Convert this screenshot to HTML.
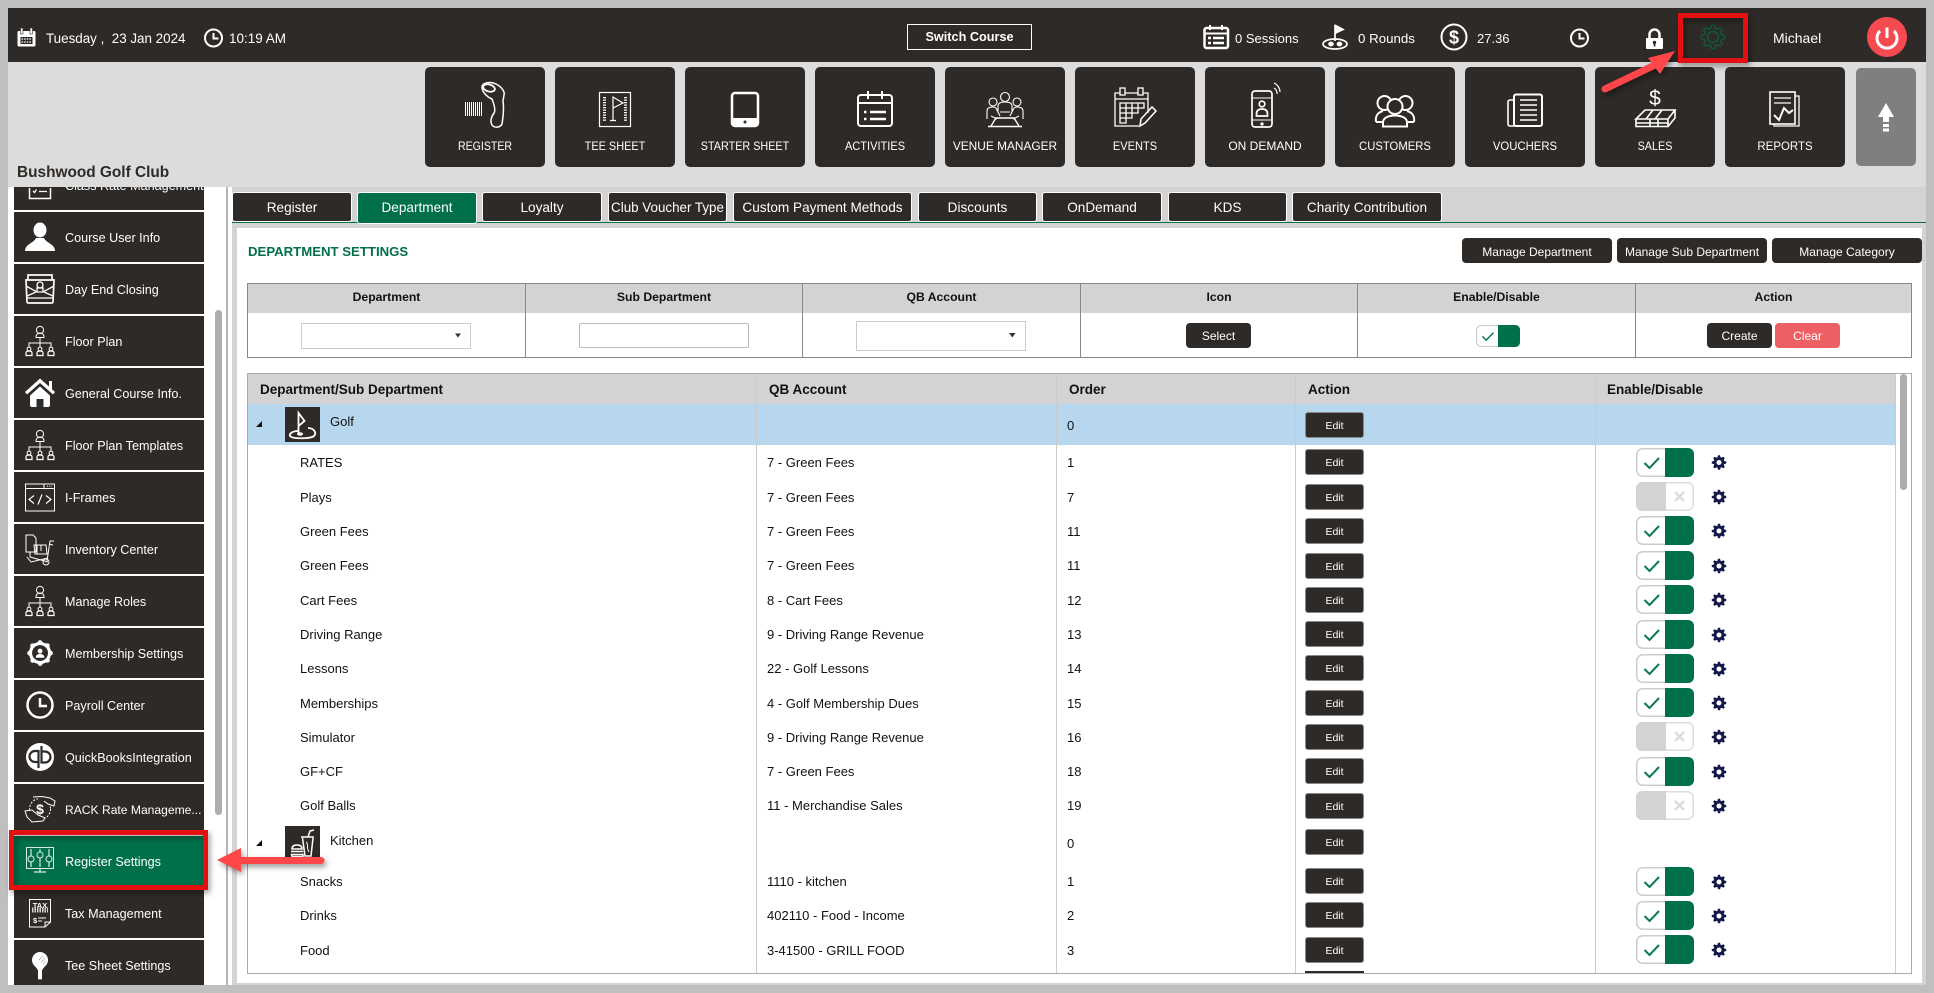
<!DOCTYPE html>
<html lang="en"><head><meta charset="utf-8"><title>Department Settings</title>
<style>
html,body{margin:0;padding:0;width:1934px;height:993px;overflow:hidden;background:#bfbfbf}
body{position:relative;font-family:"Liberation Sans",sans-serif;color:#111}
div{position:absolute;box-sizing:border-box}
svg{position:absolute;left:0;top:0;overflow:visible}
.t{white-space:nowrap;line-height:16px;height:16px;margin-top:1px}
.w{color:#fff}
.c{text-align:center}
.b{background:#2e2a27;border-radius:5px}
.n{width:120px;top:138px;font-size:12px;color:#fff;text-align:center;line-height:16px}
.s{background:#2e2a27;left:14px;width:190px;height:50px}
.st{left:65px;font-size:12.6px;color:#fff;white-space:nowrap;line-height:16px;margin-top:1px}
.tab{top:192px;height:30px;background:#2e2a27;color:#fff;font-size:13.6px;text-align:center;line-height:29px;border:1px solid #fff;border-radius:3px;white-space:nowrap}
.mb{top:238px;height:25px;width:150px;background:#2e2a27;color:#fff;font-size:12px;text-align:center;line-height:29px;border-radius:4px}
.fh{top:289px;font-size:12.2px;font-weight:bold;text-align:center;line-height:16px}
.th{top:381px;font-size:13.5px;font-weight:bold;line-height:16px;white-space:nowrap;margin-top:1px}
.r{font-size:13px;line-height:16px;white-space:nowrap;margin-top:1px}
.e{left:1305px;width:59px;height:26px;background:#2e2a27;border:1px solid #8a8a8a;border-radius:3px;color:#fff;font-size:10.5px;text-align:center;line-height:26px}
.btn{top:323px;height:25px;width:65px;border-radius:4px;color:#fff;font-size:12px;text-align:center;line-height:27px}
.vl{width:1px;top:374px;height:599px;background:#ccc}
.fl{width:1px;top:283px;height:74px;background:#888}
</style></head><body>

<!-- frame backgrounds -->
<div style="left:8px;top:8px;width:1918px;height:54px;background:#2e2a27"></div>
<div style="left:8px;top:62px;width:1918px;height:125px;background:#dcdcdc"></div>
<div style="left:8px;top:187px;width:1918px;height:798px;background:#fff"></div>
<div style="left:232px;top:187px;width:1694px;height:798px;background:#d3d3d3"></div>
<div style="left:226px;top:187px;width:2px;height:798px;background:#b5b5b5"></div>
<div style="left:237px;top:228px;width:1685px;height:755px;background:#fff"></div>
<div style="left:232px;top:222px;width:1694px;height:1px;background:#00704a"></div>
<div style="left:215px;top:310px;width:7px;height:505px;background:#aeadad;border-radius:4px"></div>

<!-- nav tiles -->
<div class="b" style="left:425px;top:67px;width:120px;height:100px"></div>
<div class="b" style="left:555px;top:67px;width:120px;height:100px"></div>
<div class="b" style="left:685px;top:67px;width:120px;height:100px"></div>
<div class="b" style="left:815px;top:67px;width:120px;height:100px"></div>
<div class="b" style="left:945px;top:67px;width:120px;height:100px"></div>
<div class="b" style="left:1075px;top:67px;width:120px;height:100px"></div>
<div class="b" style="left:1205px;top:67px;width:120px;height:100px"></div>
<div class="b" style="left:1335px;top:67px;width:120px;height:100px"></div>
<div class="b" style="left:1465px;top:67px;width:120px;height:100px"></div>
<div class="b" style="left:1595px;top:67px;width:120px;height:100px"></div>
<div class="b" style="left:1725px;top:67px;width:120px;height:100px"></div>
<div style="left:1856px;top:68px;width:60px;height:98px;background:#7f7f7f;border-radius:5px"></div>

<!-- sidebar tiles -->
<div class="s" style="top:187px;height:23px"></div>
<div class="s" style="top:212px"></div>
<div class="s" style="top:264px"></div>
<div class="s" style="top:316px"></div>
<div class="s" style="top:368px"></div>
<div class="s" style="top:420px"></div>
<div class="s" style="top:472px"></div>
<div class="s" style="top:524px"></div>
<div class="s" style="top:576px"></div>
<div class="s" style="top:628px"></div>
<div class="s" style="top:680px"></div>
<div class="s" style="top:732px"></div>
<div class="s" style="top:784px"></div>
<div class="s" style="top:836px;background:#00704a"></div>
<div class="s" style="top:888px"></div>
<div class="s" style="top:940px;height:45px"></div>

<!-- tabs -->
<div class="tab" style="left:232px;width:120px">Register</div>
<div class="tab" style="left:357px;width:120px;height:32px;background:#00704a">Department</div>
<div class="tab" style="left:482px;width:120px">Loyalty</div>
<div class="tab" style="left:608px;width:119px;font-size:13.4px">Club Voucher Type</div>
<div class="tab" style="left:733px;width:179px">Custom Payment Methods</div>
<div class="tab" style="left:918px;width:119px">Discounts</div>
<div class="tab" style="left:1042px;width:120px">OnDemand</div>
<div class="tab" style="left:1168px;width:119px">KDS</div>
<div class="tab" style="left:1292px;width:150px">Charity Contribution</div>

<!-- form table -->
<div style="left:247px;top:283px;width:1665px;height:75px;border:1px solid #888;border-width:1px;background:#fff"></div>
<div style="left:248px;top:284px;width:1663px;height:29px;background:#d3d3d3"></div>
<div class="fl" style="left:525px"></div><div class="fl" style="left:802px"></div><div class="fl" style="left:1080px"></div><div class="fl" style="left:1357px"></div><div class="fl" style="left:1635px"></div>
<div style="left:301px;top:323px;width:170px;height:26px;border:1px solid #ccc;background:#fff"></div>
<div style="left:579px;top:323px;width:170px;height:25px;border:1px solid #bbb;border-radius:2px;background:#fff"></div>
<div style="left:856px;top:321px;width:170px;height:30px;border:1px solid #ccc;background:#fff"></div>

<!-- list table -->
<div style="left:247px;top:373px;width:1665px;height:601px;border:1px solid #aaa;background:#fff"></div>
<div style="left:248px;top:374px;width:1647px;height:30px;background:#d3d3d3"></div>
<div style="left:248px;top:404px;width:1647px;height:41px;background:#b7d7ee"></div>
<div class="vl" style="left:756px"></div><div class="vl" style="left:1056px"></div><div class="vl" style="left:1295px"></div><div class="vl" style="left:1595px"></div><div class="vl" style="left:1895px"></div>
<div style="left:1900px;top:374px;width:7px;height:116px;background:#aeadad;border-radius:4px"></div>
<div style="left:1305px;top:971px;width:59px;height:2px;background:#2e2a27"></div>

<!-- icons -->
<svg width="1934" height="993" viewBox="0 0 1934 993">
<defs>
<clipPath id="side"><rect x="8" y="188" width="200" height="797"/></clipPath>
<path id="gp" d="M19.4 15a1.65 1.65 0 0 0 .33 1.82l.06.06a2 2 0 0 1 0 2.83 2 2 0 0 1-2.83 0l-.06-.06a1.65 1.65 0 0 0-1.82-.33 1.65 1.65 0 0 0-1 1.51V21a2 2 0 0 1-2 2 2 2 0 0 1-2-2v-.09A1.65 1.65 0 0 0 9 19.4a1.65 1.65 0 0 0-1.82.33l-.06.06a2 2 0 0 1-2.83 0 2 2 0 0 1 0-2.83l.06-.06a1.65 1.65 0 0 0 .33-1.82 1.65 1.65 0 0 0-1.51-1H3a2 2 0 0 1-2-2 2 2 0 0 1 2-2h.09A1.65 1.65 0 0 0 4.6 9a1.65 1.65 0 0 0-.33-1.82l-.06-.06a2 2 0 0 1 0-2.83 2 2 0 0 1 2.83 0l.06.06a1.65 1.65 0 0 0 1.82.33H9a1.65 1.65 0 0 0 1-1.51V3a2 2 0 0 1 2-2 2 2 0 0 1 2 2v.09a1.65 1.65 0 0 0 1 1.51 1.65 1.65 0 0 0 1.82-.33l.06-.06a2 2 0 0 1 2.83 0 2 2 0 0 1 0 2.83l-.06.06a1.65 1.65 0 0 0-.33 1.82V9a1.65 1.65 0 0 0 1.51 1H21a2 2 0 0 1 2 2 2 2 0 0 1-2 2h-.09a1.65 1.65 0 0 0-1.51 1z"/>
<symbol id="gear" viewBox="0 0 24 24"><use href="#gp" fill="#14194a"/><circle cx="12" cy="12" r="8" fill="#14194a"/><circle cx="12" cy="12" r="3.800" fill="#fff"/></symbol>
<symbol id="on" viewBox="0 0 58 29"><rect x=".75" y=".75" width="56.5" height="27.5" rx="6" fill="#fff" stroke="#ccc" stroke-width="1.5"/><path d="M29 0H52a6 6 0 0 1 6 6V23a6 6 0 0 1-6 6H29z" fill="#00704a"/><path d="M8.5 15l5 5 9.5-10" fill="none" stroke="#0a7a50" stroke-width="2"/></symbol>
<symbol id="off" viewBox="0 0 58 29"><rect x=".75" y=".75" width="56.5" height="27.5" rx="6" fill="#fff" stroke="#ddd" stroke-width="1.5"/><path d="M30 0H6a6 6 0 0 0-6 6V23a6 6 0 0 0 6 6H30z" fill="#d3d3d3"/><path d="M39 10l9 9M48 10l-9 9" fill="none" stroke="#ddd" stroke-width="2.6"/></symbol>
<g id="org" fill="none" stroke="#fff" stroke-width="1"><circle cx="0" cy="-11" r="3.6"/><path d="M-4-3.5c0-3.5 2-4.5 4-4.5s4 1 4 4.500zM0-3.500V6M-11 6V2H11V6"/><circle cx="-11" cy="8" r="1.900"/><circle cx="0" cy="8" r="1.900"/><circle cx="11" cy="8" r="1.900"/><path d="M-14 14.500v-2.500q0-2 3-2t3 2v2.500zM-3 14.500v-2.500q0-2 3-2t3 2v2.500zM8 14.500v-2.500q0-2 3-2t3 2v2.500z" stroke-width="1.200"/></g>
</defs>

<!-- header: calendar -->
<rect x="17.500" y="31" width="18" height="15.500" rx="1.500" fill="#fff"/><rect x="20.500" y="28" width="2.500" height="6" fill="#fff" stroke="#2e2a27" stroke-width=".6"/><rect x="30" y="28" width="2.500" height="6" fill="#fff" stroke="#2e2a27" stroke-width=".6"/><rect x="20.500" y="37" width="12" height="7" fill="#2e2a27"/><path d="M21.500 39H31.500M21.500 42H31.500" stroke="#fff" stroke-width="1.200" stroke-dasharray="1.600 1"/>
<g fill="none" stroke="#fff" stroke-width="2"><circle cx="213.500" cy="38" r="8.500"/><path d="M213.500 33V38.500H218.500"/><circle cx="1579.500" cy="38" r="8.500"/><path d="M1579.500 33V38.500H1584.500"/></g>
<!-- sessions -->
<g fill="none" stroke="#fff"><rect x="1204.500" y="28" width="23.500" height="20" rx="2" stroke-width="2.500"/><path d="M1204 33.500H1228" stroke-width="2"/><path d="M1210 25V30M1222 25V30" stroke-width="2"/><path d="M1208 38H1211M1213 38H1224M1208 43H1211M1213 43H1224" stroke-width="2.400"/></g>
<!-- rounds -->
<g fill="none" stroke="#fff" stroke-width="1.700"><path d="M1335 41V25"/><path d="M1335.500 25.500L1343 29.500 1335.500 33z" fill="#fff"/><ellipse cx="1335" cy="44" rx="12" ry="5"/><ellipse cx="1331" cy="44" rx="2" ry="1.500" fill="#fff"/><ellipse cx="1339.500" cy="44" rx="2" ry="1.500" fill="#fff"/></g>
<circle cx="1454" cy="37" r="12.500" fill="none" stroke="#fff" stroke-width="2"/><text x="1454" y="43.500" font-size="18" font-weight="bold" fill="#fff" text-anchor="middle" font-family="Liberation Sans">$</text>
<!-- lock -->
<rect x="1646" y="38" width="17" height="11" rx="1" fill="#fff"/><path d="M1649.500 38V34.500a5 5 0 0 1 10 0V38" fill="none" stroke="#fff" stroke-width="2.500"/><circle cx="1654.500" cy="42.500" r="1.700" fill="#2e2a27"/><rect x="1653.700" y="43" width="1.700" height="3.500" fill="#2e2a27"/>
<!-- gear green -->
<g transform="translate(1700 24) scale(1.08)" fill="none" stroke="#0b5e3d" stroke-width="1.300"><use href="#gp"/><circle cx="12" cy="12" r="5"/></g>
<!-- power -->
<ellipse cx="1887" cy="37" rx="20" ry="20" fill="#f44a50"/><path d="M1880 31a10 10 0 1 0 14 0M1887 27.500V38" fill="none" stroke="#fff" stroke-width="3"/>

<!-- nav icons -->
<path d="M465 109H483" stroke="#fff" stroke-width="14" stroke-dasharray="1 1"/>
<g fill="none" stroke="#fff" stroke-width="1.500"><path d="M482 87C482 83 490 81 496 84 502 87 505 92 504 95L503 101C504 108 503 118 502 124 500 128 494 128 492 125 490 122 491 117 494 113 496 110 494 104 492 99 487 97 482 92 482 87Z"/><ellipse cx="489" cy="88" rx="6" ry="3.500" transform="rotate(15 489 88)" stroke-width="1.800"/></g>
<g fill="none" stroke="#fff"><rect x="599.500" y="92.500" width="31" height="34" stroke-width="1.200"/><path d="M604.500 97V122M625.500 97V122" stroke-width="3" stroke-dasharray="1.200 1.300"/><path d="M613 120V97L623 103 613 108M610 120.500H616" stroke-width="1.200"/></g>
<rect x="732" y="93" width="26" height="33" rx="3" fill="none" stroke="#fff" stroke-width="2.500"/><rect x="732" y="118" width="26" height="8" fill="#fff"/><circle cx="745" cy="122" r="1.500" fill="#2e2a27"/>
<g fill="none" stroke="#fff" stroke-width="2"><rect x="858" y="95" width="34" height="31" rx="3"/><path d="M858 103H892M868 91V99M882 91V99"/><path d="M864 112H866.500M864 119H866.500M870 112H886M870 119H886" stroke-width="2.400"/></g>
<g fill="none" stroke="#fff" stroke-width="1.100"><circle cx="1005" cy="97" r="4.500"/><circle cx="993" cy="102" r="4"/><circle cx="1017" cy="102" r="4"/><path d="M998 112V106Q998 102 1005 102T1012 106V112M987 119V111Q987 107 993 107 996 107 997 110L1000 116M1023 119V111Q1023 107 1017 107 1014 107 1013 110L1010 116"/><path d="M1000 112H1010M991 116L997 119M1019 116L1013 119"/><path d="M988 126.500H1022M991 126L996 118H1014L1019 126" stroke-width="1.400"/></g>
<g fill="none" stroke="#fff" stroke-width="1.300"><path d="M1148 113V93H1115V126H1139"/><path d="M1115 99H1148"/><rect x="1120" y="88" width="5" height="7" fill="#2e2a27"/><rect x="1138" y="88" width="5" height="7" fill="#2e2a27"/><path d="M1120 103H1144V108H1138V113H1132V118H1126V123H1120ZM1120 108H1138M1120 113H1132M1120 118H1126M1126 103V123M1132 103V118M1138 103V113"/><path d="M1140 126L1141 119 1152 107 1156 111 1145 123Z" stroke-width="1.500"/></g>
<g fill="none" stroke="#fff" stroke-width="1.700"><rect x="1252" y="91" width="20" height="36" rx="3"/><path d="M1252 98H1272M1252 120H1272" stroke-width="1"/><circle cx="1262" cy="104" r="2.800"/><path d="M1256.500 116v-2q0-5 5.500-5t5.500 5v2z"/><circle cx="1262" cy="124" r=".8"/><path d="M1274 88a6 6 0 0 1 3 6M1274 83a10 10 0 0 1 6 9" stroke-width="1.200"/></g>
<g fill="#2e2a27" stroke="#fff" stroke-width="2"><circle cx="1384.500" cy="103" r="7"/><circle cx="1405.500" cy="103" r="7"/><path d="M1376 122c-1-7 3-10 7-11M1414 122c1-7-3-10-7-11M1376 122h6M1414 122h-6" fill="none"/><circle cx="1395" cy="106.500" r="7.500"/><path d="M1383 126.500v-4c0-5 6-7 12-7s12 2 12 7v4z"/></g>
<g fill="none" stroke="#fff"><rect x="1514" y="94.500" width="28" height="31.500" rx="2" stroke-width="2"/><path d="M1514 100h-4a2 2 0 0 0-2 2v22a2 2 0 0 0 2 2h6" stroke-width="1.600"/><path d="M1520 100H1537M1520 105H1537M1520 110H1537M1520 115H1537M1520 120H1537" stroke-width="1.600"/></g>
<text x="1655" y="105" font-size="21" fill="#fff" text-anchor="middle" font-family="Liberation Sans">$</text>
<g fill="none" stroke="#fff" stroke-width="1.600"><path d="M1645 110H1675L1668 119H1636ZM1653 110L1646 119M1662 110L1655 119M1636 119V126.500H1668V119M1668 126.500L1675 118V110M1636 123H1668M1650 119V126.500M1658 119V126.500"/></g>
<g fill="none" stroke="#fff"><rect x="1770" y="92" width="25" height="32" stroke-width="1.600"/><path d="M1795 96h4v30h-25v-2" stroke-width="1.300"/><path d="M1774 98H1791M1774 103H1791" stroke-width="1.300"/><path d="M1774 115L1779 120 1784 108 1789 113 1793 110" stroke-width="2"/></g>
<path d="M1886 103L1878 117H1883V122H1889V117H1894ZM1883 124H1889V127H1883ZM1883 128.500H1889V131.500H1883Z" fill="#fff"/>

<!-- select carets -->
<path d="M455 333.500H461L458 337.500ZM1009 333H1015.500L1012.300 337.500Z" fill="#333"/>
<use href="#on" x="1476" y="325" width="44" height="22"/>

<!-- table toggles + gears -->
<use href="#on" x="1636" y="448" width="58" height="29"/><use href="#off" x="1636" y="482" width="58" height="29"/><use href="#on" x="1636" y="516" width="58" height="29"/><use href="#on" x="1636" y="551" width="58" height="29"/><use href="#on" x="1636" y="585" width="58" height="29"/><use href="#on" x="1636" y="620" width="58" height="29"/><use href="#on" x="1636" y="654" width="58" height="29"/><use href="#on" x="1636" y="688" width="58" height="29"/><use href="#off" x="1636" y="722" width="58" height="29"/><use href="#on" x="1636" y="757" width="58" height="29"/><use href="#off" x="1636" y="791" width="58" height="29"/><use href="#on" x="1636" y="867" width="58" height="29"/><use href="#on" x="1636" y="901" width="58" height="29"/><use href="#on" x="1636" y="935" width="58" height="29"/>
<g><use href="#gear" x="1711" y="454.500" width="16" height="16"/><use href="#gear" x="1711" y="489" width="16" height="16"/><use href="#gear" x="1711" y="523" width="16" height="16"/><use href="#gear" x="1711" y="558" width="16" height="16"/><use href="#gear" x="1711" y="592" width="16" height="16"/><use href="#gear" x="1711" y="627" width="16" height="16"/><use href="#gear" x="1711" y="661" width="16" height="16"/><use href="#gear" x="1711" y="695" width="16" height="16"/><use href="#gear" x="1711" y="729" width="16" height="16"/><use href="#gear" x="1711" y="764" width="16" height="16"/><use href="#gear" x="1711" y="798" width="16" height="16"/><use href="#gear" x="1711" y="874" width="16" height="16"/><use href="#gear" x="1711" y="908" width="16" height="16"/><use href="#gear" x="1711" y="942" width="16" height="16"/></g>

<!-- tree triangles and dept icons -->
<path d="M262 421V427H256ZM262 840V846H256Z" fill="#111"/>
<rect x="285" y="407" width="35" height="35" fill="#2e2a27"/>
<g fill="none" stroke="#fff" stroke-width="1.800"><path d="M298.500 433V413L304.500 421 298.500 426"/><path d="M298 431C292 431 289 434 290 436 292 439 310 439 314 436 317 433 314 428 308 428"/></g><ellipse cx="300" cy="434" rx="3" ry="1.700" fill="#fff"/>
<rect x="285" y="826" width="35" height="35" fill="#2e2a27"/>
<g fill="none" stroke="#fff" stroke-width="1.500"><path d="M301 837H314M302.500 838L305 856H311L313 838M308 837L310 831 314 830"/><path d="M292 849q0-4 5-4t5 4zM291 851.500H303M291.500 854.500H303v2H292z"/><path d="M306 842c3 2 0 6 3 10" stroke-width="1"/></g>

<!-- sidebar icons -->
<g clip-path="url(#side)">
<g fill="none" stroke="#fff"><rect x="29.500" y="178" width="21" height="20.500" stroke-width="1.500"/><path d="M33 191l1.500 1.500 2-3M39 191.500H47" stroke-width="1.300"/></g>
<g transform="translate(40 237)" fill="#fff"><ellipse cx="0" cy="-7" rx="6.500" ry="7.500"/><path d="M-15 14C-15 7-6 6-4 1H4C6 6 15 7 15 14Z"/></g>
<g transform="translate(40 289)" fill="none" stroke="#fff" stroke-width="1.300"><path d="M-12-9V-14H12V-9M-14-9H14L13 13Q13 14 11 14H-11Q-13 14-13 13Z" stroke-width="1.700"/><path d="M-14-3L-3 3H3L14-3M-13 7L-4 3M13 7L4 3M-13 9H13"/><circle cx="0" cy="-4" r="3"/><path d="M-3 3V-1H3V3"/></g>
<use href="#org" x="40" y="341"/>
<g transform="translate(40 393)" fill="#fff"><path d="M0-14.500L9-6.500V-12H12V-3.800L15-1 13 1.500 0-10 -13 1.500-15-1Z"/><path d="M-10 2.500L0-6.500 10 2.500V12a2 2 0 0 1-2 2H3.500V6H-3.500V14H-8a2 2 0 0 1-2-2Z"/></g>
<use href="#org" x="40" y="445"/>
<g transform="translate(40 497)" fill="none" stroke="#fff" stroke-width="1"><rect x="-14.500" y="-13" width="29" height="27"/><path d="M-14.500-8.500H14.500M4-13V-8.500"/><path d="M7-10.800H12" stroke-dasharray="1 1.200"/><path d="M-6-1.500L-11 2.500-6 6.500M6-1.500L11 2.500 6 6.500M2-2.500L-2 7.500" stroke-width="1.200"/></g>
<g transform="translate(40 549)" fill="none" stroke="#fff" stroke-width="1"><path d="M-14-14H-7L-4-11V3H-14Z"/><path d="M-10 3V8L8 13M-13 8L-9 13 8 9"/><path d="M-6-4H6L7 5H-5ZM-3-4V5M1-4V2"/><circle cx="6" cy="13" r="3"/><path d="M7 12L10-8H14M9-5L13-4"/></g>
<use href="#org" x="40" y="601"/>
<g transform="translate(26 639) scale(1.170)"><use href="#gp" fill="#fff"/><circle cx="12" cy="12" r="9.500" fill="#fff"/><circle cx="12" cy="12" r="6.800" fill="#2e2a27"/><circle cx="12" cy="10.300" r="2.100" fill="#fff"/><path d="M8.300 16c0-2.400 1.800-3.300 3.700-3.300s3.700.9 3.700 3.300z" fill="#fff"/></g>
<g transform="translate(40 705)" fill="none" stroke="#fff"><circle r="12.500" stroke-width="2.500"/><path d="M0-7V1H7" stroke-width="2.500"/></g>
<g transform="translate(40 757)"><circle r="14" fill="#fff"/><g fill="none" stroke="#2e2a27" stroke-width="2.200"><path d="M-1.500 11V-6H-5a5.500 5.500 0 0 0 0 11H-1.500"/><path d="M1.500-11V5.500H5a5.500 5.500 0 0 0 0-11H1.500"/></g></g>
<g transform="translate(40 809)" fill="none" stroke="#fff" stroke-width="1"><circle r="10.500" stroke-dasharray="2 1.500"/><path d="M-7-12L2-12.500 10-11 15-8 14-3 8-5 4-8" fill="#2e2a27"/><path d="M-15 2L-8 1-2 6 5 9 3 12-8 13-13 8Z" fill="#2e2a27"/></g>
<text x="40" y="814" font-size="14" font-weight="bold" fill="#fff" text-anchor="middle" font-family="Liberation Sans">$</text>
<g transform="translate(40 861)" fill="none" stroke="#d8ece4" stroke-width="1"><rect x="-13.500" y="-13.500" width="27" height="21"/><path d="M-6 11H6M0 8V11M-9-12V-5M-9 1V6M0-12V-9M0-3V6M9-12V-5M9 1V6" stroke-width="1.200"/><circle cx="-9" cy="-2" r="3"/><circle cx="0" cy="-6" r="3"/><circle cx="9" cy="-2" r="3"/></g>
<g transform="translate(40 913)" fill="none" stroke="#fff" stroke-width="1"><path d="M-10.500-13.500H10.500V9L5 14H-10.500ZM10.500 9H5V14"/><path d="M-8-3H8" stroke-width="5" stroke-dasharray="1.500 1" opacity=".8"/><path d="M-2 5H6M-2 8H2"/></g>
<text x="40" y="908" font-size="7.500" font-weight="bold" fill="#fff" text-anchor="middle" font-family="Liberation Sans">TAX</text>
<text x="33" y="923" font-size="7.500" font-weight="bold" fill="#fff" font-family="Liberation Sans">$</text>
<g transform="translate(40 965)" fill="#fff"><circle cx="0" cy="-5" r="8"/><path d="M-6 0H6L2 5V14Q0 15-2 14V5Z"/><path d="M1-3L5-7M3-1.500L6-4M-1-5L3-9" stroke="#888" stroke-width="1" stroke-dasharray="1 1"/></g>
</g>
</svg>

<!-- header text -->
<div class="t w" style="left:46px;top:30px;font-size:13.400px">Tuesday ,&nbsp; 23 Jan 2024</div>
<div class="t w" style="left:229px;top:30px;font-size:13.500px">10:19 AM</div>
<div class="c w" style="left:907px;top:24px;width:125px;height:26px;border:1.500px solid #fff;font-size:12.700px;font-weight:bold;line-height:25px">Switch Course</div>
<div class="t w" style="left:1235px;top:30px;font-size:13px">0 Sessions</div>
<div class="t w" style="left:1358px;top:30px;font-size:13.300px">0 Rounds</div>
<div class="t w" style="left:1477px;top:30px;font-size:13px">27.36</div>
<div class="t w" style="left:1773px;top:29px;font-size:14px">Michael</div>

<div class="t" style="left:17px;top:164px;font-size:15.400px;font-weight:bold;color:#2e2a27">Bushwood Golf Club</div>

<div class="n" style="left:425px;transform:scaleX(.88)">REGISTER</div>
<div class="n" style="left:555px;transform:scaleX(.91)">TEE SHEET</div>
<div class="n" style="left:685px;transform:scaleX(.9)">STARTER SHEET</div>
<div class="n" style="left:815px;transform:scaleX(.92)">ACTIVITIES</div>
<div class="n" style="left:945px;transform:scaleX(.99)">VENUE MANAGER</div>
<div class="n" style="left:1075px;transform:scaleX(.92)">EVENTS</div>
<div class="n" style="left:1205px">ON DEMAND</div>
<div class="n" style="left:1335px;transform:scaleX(.94)">CUSTOMERS</div>
<div class="n" style="left:1465px;transform:scaleX(.945)">VOUCHERS</div>
<div class="n" style="left:1595px;transform:scaleX(.9)">SALES</div>
<div class="n" style="left:1725px;transform:scaleX(.955)">REPORTS</div>

<!-- sidebar labels -->
<div style="left:14px;top:187px;width:190px;height:6px;overflow:hidden"><div class="st" style="left:51px;top:-10px">Class Rate Management</div></div>
<div class="st" style="top:229px">Course User Info</div>
<div class="st" style="top:281px">Day End Closing</div>
<div class="st" style="top:333px">Floor Plan</div>
<div class="st" style="top:385px">General Course Info.</div>
<div class="st" style="top:437px">Floor Plan Templates</div>
<div class="st" style="top:489px">I-Frames</div>
<div class="st" style="top:541px">Inventory Center</div>
<div class="st" style="top:593px">Manage Roles</div>
<div class="st" style="top:645px">Membership Settings</div>
<div class="st" style="top:697px">Payroll Center</div>
<div class="st" style="top:749px">QuickBooksIntegration</div>
<div class="st" style="top:801px;font-size:12.100px">RACK Rate Manageme...</div>
<div class="st" style="top:853px">Register Settings</div>
<div class="st" style="top:905px">Tax Management</div>
<div class="st" style="top:957px">Tee Sheet Settings</div>

<!-- settings title & manage buttons -->
<div class="t" style="left:248px;top:243px;font-size:13.200px;font-weight:bold;color:#00704a">DEPARTMENT SETTINGS</div>
<div class="mb" style="left:1462px">Manage Department</div>
<div class="mb" style="left:1617px">Manage Sub Department</div>
<div class="mb" style="left:1772px">Manage Category</div>

<!-- form table text -->
<div class="fh" style="left:248px;width:277px">Department</div>
<div class="fh" style="left:526px;width:276px">Sub Department</div>
<div class="fh" style="left:803px;width:277px">QB Account</div>
<div class="fh" style="left:1081px;width:276px">Icon</div>
<div class="fh" style="left:1358px;width:277px">Enable/Disable</div>
<div class="fh" style="left:1636px;width:275px">Action</div>
<div class="btn" style="left:1186px;background:#2e2a27">Select</div>
<div class="btn" style="left:1707px;background:#2e2a27">Create</div>
<div class="btn" style="left:1775px;background:#ee5f63">Clear</div>

<!-- list header -->
<div class="th" style="left:260px">Department/Sub Department</div>
<div class="th" style="left:769px">QB Account</div>
<div class="th" style="left:1069px">Order</div>
<div class="th" style="left:1308px">Action</div>
<div class="th" style="left:1607px">Enable/Disable</div>

<!-- rows -->
<div class="r" style="left:330px;top:413px">Golf</div><div class="r" style="left:1067px;top:417px">0</div><div class="e" style="top:412px">Edit</div>

<div class="r" style="left:300px;top:454px">RATES</div><div class="r" style="left:767px;top:454px">7 - Green Fees</div><div class="r" style="left:1067px;top:454px">1</div><div class="e" style="top:449px">Edit</div>
<div class="r" style="left:300px;top:489px">Plays</div><div class="r" style="left:767px;top:489px">7 - Green Fees</div><div class="r" style="left:1067px;top:489px">7</div><div class="e" style="top:484px">Edit</div>
<div class="r" style="left:300px;top:523px">Green Fees</div><div class="r" style="left:767px;top:523px">7 - Green Fees</div><div class="r" style="left:1067px;top:523px">11</div><div class="e" style="top:518px">Edit</div>
<div class="r" style="left:300px;top:557px">Green Fees</div><div class="r" style="left:767px;top:557px">7 - Green Fees</div><div class="r" style="left:1067px;top:557px">11</div><div class="e" style="top:553px">Edit</div>
<div class="r" style="left:300px;top:592px">Cart Fees</div><div class="r" style="left:767px;top:592px">8 - Cart Fees</div><div class="r" style="left:1067px;top:592px">12</div><div class="e" style="top:587px">Edit</div>
<div class="r" style="left:300px;top:626px">Driving Range</div><div class="r" style="left:767px;top:626px">9 - Driving Range Revenue</div><div class="r" style="left:1067px;top:626px">13</div><div class="e" style="top:621px">Edit</div>
<div class="r" style="left:300px;top:660px">Lessons</div><div class="r" style="left:767px;top:660px">22 - Golf Lessons</div><div class="r" style="left:1067px;top:660px">14</div><div class="e" style="top:655px">Edit</div>
<div class="r" style="left:300px;top:695px">Memberships</div><div class="r" style="left:767px;top:695px">4 - Golf Membership Dues</div><div class="r" style="left:1067px;top:695px">15</div><div class="e" style="top:690px">Edit</div>
<div class="r" style="left:300px;top:729px">Simulator</div><div class="r" style="left:767px;top:729px">9 - Driving Range Revenue</div><div class="r" style="left:1067px;top:729px">16</div><div class="e" style="top:724px">Edit</div>
<div class="r" style="left:300px;top:763px">GF+CF</div><div class="r" style="left:767px;top:763px">7 - Green Fees</div><div class="r" style="left:1067px;top:763px">18</div><div class="e" style="top:758px">Edit</div>
<div class="r" style="left:300px;top:797px">Golf Balls</div><div class="r" style="left:767px;top:797px">11 - Merchandise Sales</div><div class="r" style="left:1067px;top:797px">19</div><div class="e" style="top:793px">Edit</div>
<div class="r" style="left:330px;top:832px">Kitchen</div><div class="r" style="left:1067px;top:835px">0</div><div class="e" style="top:829px">Edit</div>
<div class="r" style="left:300px;top:873px">Snacks</div><div class="r" style="left:767px;top:873px">1110 - kitchen</div><div class="r" style="left:1067px;top:873px">1</div><div class="e" style="top:868px">Edit</div>
<div class="r" style="left:300px;top:907px">Drinks</div><div class="r" style="left:767px;top:907px">402110 - Food - Income</div><div class="r" style="left:1067px;top:907px">2</div><div class="e" style="top:902px">Edit</div>
<div class="r" style="left:300px;top:942px">Food</div><div class="r" style="left:767px;top:942px">3-41500 - GRILL FOOD</div><div class="r" style="left:1067px;top:942px">3</div><div class="e" style="top:937px">Edit</div>

<!-- red annotations -->
<svg width="1934" height="993" viewBox="0 0 1934 993" style="filter:drop-shadow(2px 3px 3px rgba(0,0,0,.4))">
<rect x="1680.500" y="15.500" width="65" height="45" fill="none" stroke="#e30f12" stroke-width="5"/>
<rect x="11.500" y="832.500" width="194" height="55" fill="none" stroke="#e30f12" stroke-width="5"/>
<path d="M1605 89L1655 65" stroke="#ff474a" stroke-width="7" stroke-linecap="round"/>
<path d="M1675 51L1648 58 1660 74Z" fill="#ff474a"/>
<path d="M241 860.500H321" stroke="#ff474a" stroke-width="7" stroke-linecap="round"/>
<path d="M217 860L241 848V872Z" fill="#ff474a"/>
</svg>
</body></html>
